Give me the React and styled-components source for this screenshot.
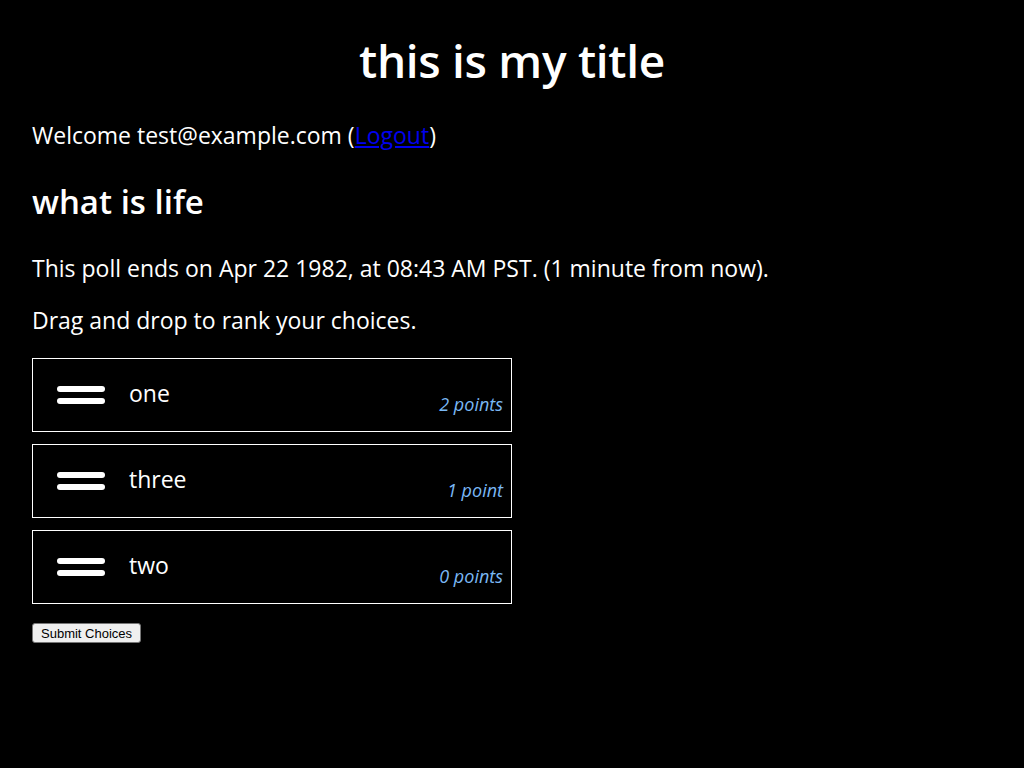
import React from 'react';
import styled, { createGlobalStyle } from 'styled-components';

const GlobalStyle = createGlobalStyle`
  html, body {
    margin: 0;
    background: #000;
    color: #fff;
    font-family: 'Open Sans', 'Noto Sans', sans-serif;
  }
`;

const Page = styled.div`
  padding: 0 32px 32px;
`;

const Title = styled.h1`
  text-align: center;
  font-size: 46px;
  font-weight: 600;
  letter-spacing: -0.3px;
  margin: 0;
  padding-top: 30px;
  line-height: 60px;
`;

const Welcome = styled.p`
  font-size: 23px;
  margin: 30px 0 0;
  line-height: 30px;
  a { color: #0000ee; }
`;

const Question = styled.h2`
  font-size: 33px;
  font-weight: 600;
  margin: 32px 0 0;
  line-height: 40px;
`;

const Text = styled.p`
  font-size: 23px;
  margin: ${(p) => p.$top}px 0 0;
  line-height: 30px;
`;

const ChoiceList = styled.ul`
  list-style: none;
  margin: 23px 0 0;
  padding: 0;
  width: 480px;
  display: flex;
  flex-direction: column;
  gap: 12px;
`;

const Choice = styled.li`
  box-sizing: border-box;
  height: 74px;
  border: 1px solid #fff;
  display: flex;
  align-items: center;
  padding: 0 8px 0 24px;
`;

const Handle = styled.span`
  display: flex;
  flex-direction: column;
  gap: 6px;
  width: 48px;
  span {
    height: 6px;
    border-radius: 3px;
    background: #fff;
  }
`;

const Label = styled.span`
  font-size: 23px;
  margin-left: 24px;
  margin-top: -4px;
  flex: 1;
`;

const Points = styled.span`
  align-self: flex-end;
  margin-bottom: 15px;
  font-size: 18px;
  font-style: italic;
  color: #7ab8f5;
`;

const SubmitButton = styled.button`
  margin-top: 19px;
  font-family: 'Liberation Sans', Arial, sans-serif;
  font-size: 13px;
  height: 20px;
  padding: 0 8px;
  background: #efefef;
  color: #000;
  border: 1px solid #767676;
  border-radius: 3px;
`;

const choices = [
  { label: 'one', points: '2 points' },
  { label: 'three', points: '1 point' },
  { label: 'two', points: '0 points' },
];

export default function App() {
  return (
    <>
      <GlobalStyle />
      <Page>
        <Title>this is my title</Title>
        <Welcome>
          Welcome test@example.com (<a href="#">Logout</a>)
        </Welcome>
        <Question>what is life</Question>
        <Text $top={31}>This poll ends on Apr 22 1982, at 08:43 AM PST. (1 minute from now).</Text>
        <Text $top={22}>Drag and drop to rank your choices.</Text>
        <ChoiceList>
          {choices.map((c) => (
            <Choice key={c.label}>
              <Handle><span /><span /></Handle>
              <Label>{c.label}</Label>
              <Points>{c.points}</Points>
            </Choice>
          ))}
        </ChoiceList>
        <SubmitButton>Submit Choices</SubmitButton>
      </Page>
    </>
  );
}
